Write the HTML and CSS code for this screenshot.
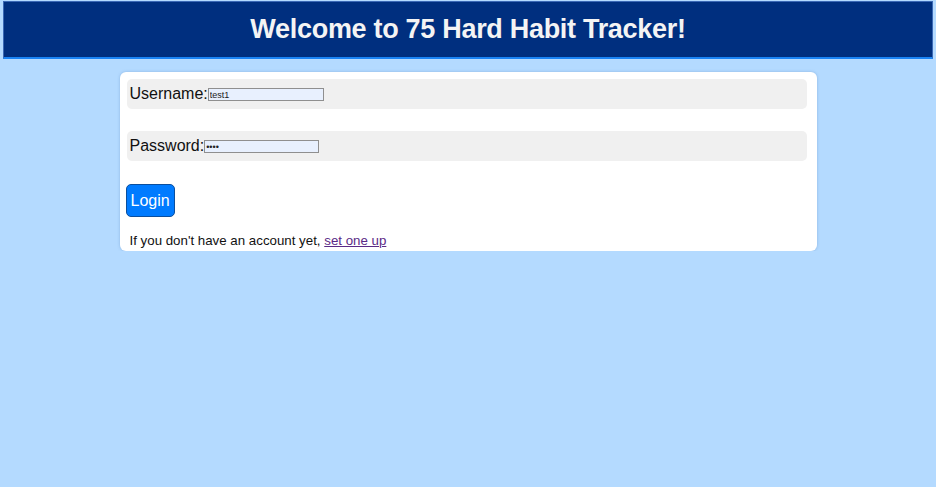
FILE: index.html
```html
<!DOCTYPE html>
<html>
<head>
<meta charset="utf-8">
<link rel="stylesheet" href="styles.css">
</head>
<body>
<header class="top">
  <h1 class="title">Welcome to 75 Hard Habit Tracker!</h1>
</header>
<main class="card">
  <div class="field">
    <label class="label">Username:</label><input class="input input-user" type="text" value="test1">
  </div>
  <div class="field">
    <label class="label">Password:</label><input class="input input-pass" type="password" value="test">
  </div>
  <button class="btn">Login</button>
  <p class="note">If you don't have an account yet, <a class="link" href="#">set one up</a></p>
</main>
</body>
</html>
```
FILE: styles.css
```css
html, body {
  margin: 0;
  padding: 0;
}
body {
  background: #b4daff;
  font-family: "Liberation Sans", Arial, sans-serif;
  padding: 1px 3px 0 3px;
}
.top {
  background: #002f7f;
  border: 1px solid #3a68b5;
  border-bottom: 2px solid #1a84f5;
  height: 55px;
  display: flex;
  align-items: center;
  justify-content: center;
}
.title {
  margin: 0;
  color: #f4f4f4;
  font-size: 27px;
  font-weight: bold;
  letter-spacing: -0.3px;
}
.card {
  width: 680px;
  margin: 13px auto 0 auto;
  background: #fff;
  border-radius: 6px;
  box-shadow: 0 0 3px rgba(60, 110, 170, 0.35);
  padding: 7px 10px 3px 7px;
}
.field {
  background: #f0f0f0;
  border-radius: 5px;
  height: 30px;
  display: flex;
  align-items: center;
  padding-left: 3px;
  margin-bottom: 22px;
}
.label {
  font-size: 16px;
  color: #111;
}
.input {
  height: 13px;
  box-sizing: border-box;
  border: 1px solid #8f8f8f;
  background: #e8f0fe;
  font-size: 9px;
  padding: 0 1px;
  margin: 1px 0 0 0;
  font-family: "Liberation Sans", Arial, sans-serif;
  color: #222;
}
.input-user { width: 116px; }
.input-pass { width: 115px; }
.btn {
  display: block;
  margin: 23px 0 0 -1px;
  background: #007bff;
  color: #fff;
  border: 1px solid #0b4f9e;
  border-radius: 5px;
  font-size: 16px;
  height: 33px;
  padding: 0 4px;
  font-family: "Liberation Sans", Arial, sans-serif;
}
.note {
  margin: 16px 0 0 3px;
  font-size: 13.3px;
  color: #111;
}
.link {
  color: #5b2a86;
}
```
